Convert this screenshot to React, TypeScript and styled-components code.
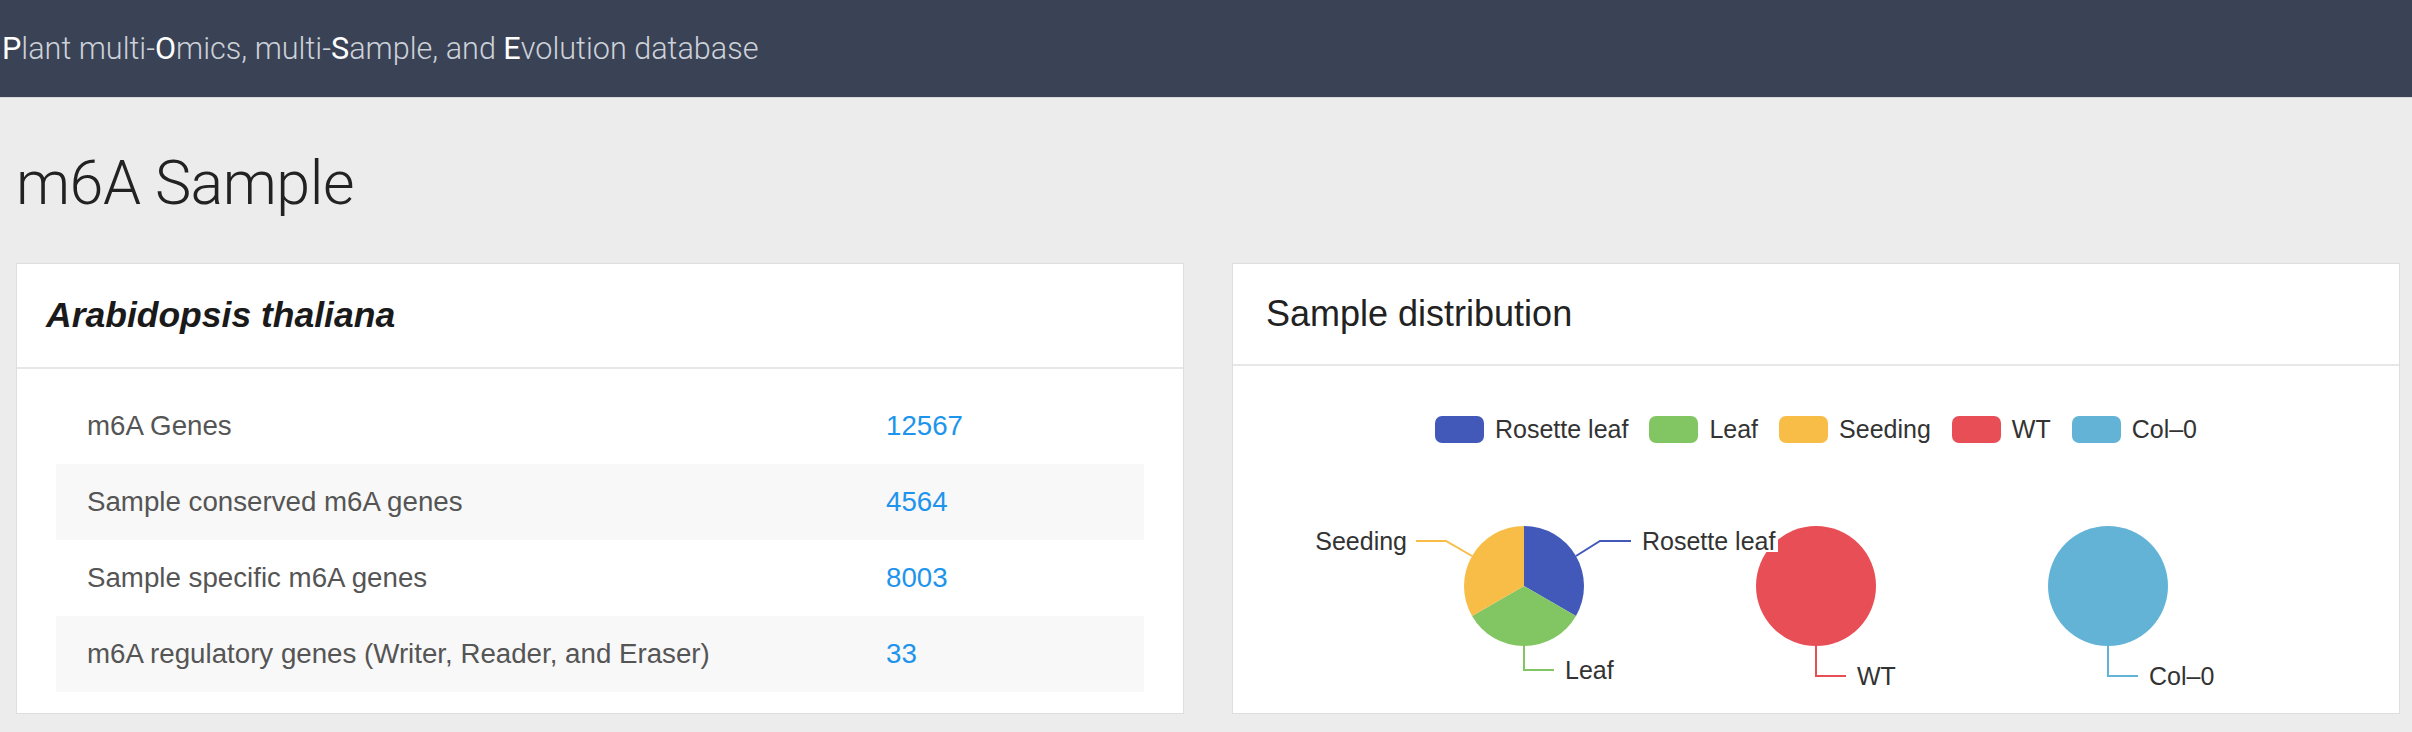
import React from "react";
import styled, { createGlobalStyle } from "styled-components";

const GlobalStyle = createGlobalStyle`
  html, body { margin: 0; padding: 0; background: #ececec; }
  body { font-family: "Liberation Sans", Arial, sans-serif; }
  #root { min-height: 732px; }
`;

const TopBar = styled.header`
  height: 97px;
  background: #3a4256;
  display: flex;
  align-items: center;
  padding-left: 2px;
  box-shadow: 0 1px 0 #d9d9d9;
`;

const BrandText = styled.span`
  font-family: Roboto, "Liberation Sans", sans-serif;
  font-weight: 300;
  font-size: 30.6px;
  color: #cdd1d8;
  white-space: pre;
`;

const Initial = styled.span`
  color: #ffffff;
  font-weight: 400;
`;

const PageTitle = styled.h1`
  margin: 53px 0 0 16px;
  font-family: Roboto, "Liberation Sans", sans-serif;
  font-weight: 300;
  font-size: 61px;
  line-height: 1.1;
  color: #222;
  letter-spacing: -0.5px;
`;

const CardGrid = styled.div`
  display: grid;
  grid-template-columns: 1168px 1168px;
  column-gap: 48px;
  padding: 0 12px 0 16px;
  margin-top: 46px;
`;

const Card = styled.section`
  background: #fff;
  border: 1px solid #dedede;
  height: 451px;
  box-sizing: border-box;
  display: flex;
  flex-direction: column;
`;

const CardHeader = styled.div<{ $h: number; $pad: number }>`
  height: ${(p) => p.$h}px;
  box-sizing: border-box;
  border-bottom: 2px solid #e7e7e7;
  display: flex;
  align-items: center;
  padding-left: ${(p) => p.$pad}px;
  flex-shrink: 0;
`;

const SpeciesTitle = styled.h3`
  margin: 0;
  font-size: 35.5px;
  font-weight: 700;
  font-style: italic;
  color: #1a1a1a;
`;

const PanelTitle = styled.h3`
  margin: 0;
  font-size: 36px;
  font-weight: 400;
  color: #222;
`;

const TableBody = styled.div`
  padding: 19px 39px 0;
`;

const StatRow = styled.div`
  display: grid;
  grid-template-columns: 799px 1fr;
  align-items: center;
  height: 76px;
  padding: 0 31px;
  font-size: 27.7px;
  color: #555;
  &:nth-child(even) {
    background: #f8f8f8;
  }
`;

const StatValue = styled.a`
  color: #1e94ec;
  text-decoration: none;
`;

const ChartBody = styled.div`
  padding-top: 50px;
  display: flex;
  flex-direction: column;
`;

const Legend = styled.div`
  display: flex;
  justify-content: center;
  gap: 21px;
  height: 27px;
`;

const LegendItem = styled.div`
  display: flex;
  align-items: center;
  gap: 11px;
  font-size: 25px;
  color: #333;
`;

const Swatch = styled.span<{ $c: string }>`
  display: block;
  width: 49px;
  height: 27px;
  border-radius: 7px;
  background: ${(p) => p.$c};
`;

const ChartSvg = styled.svg`
  display: block;
  width: 1166px;
  height: 270px;
  font-family: "Liberation Sans", Arial, sans-serif;
`;

const C = {
  blue: "#4259ba",
  green: "#82c563",
  yellow: "#f8bd47",
  red: "#e84e55",
  sky: "#63b3d7",
};

const legend = [
  { name: "Rosette leaf", c: C.blue },
  { name: "Leaf", c: C.green },
  { name: "Seeding", c: C.yellow },
  { name: "WT", c: C.red },
  { name: "Col\u20130", c: C.sky },
];

const stats = [
  { label: "m6A Genes", value: "12567" },
  { label: "Sample conserved m6A genes", value: "4564" },
  { label: "Sample specific m6A genes", value: "8003" },
  { label: "m6A regulatory genes (Writer, Reader, and Eraser)", value: "33" },
];

const PieCharts: React.FC = () => {
  const r = 60;
  const cy = 143;
  const pt = (cx: number, deg: number) => {
    const a = (deg * Math.PI) / 180;
    return `${cx + r * Math.sin(a)},${cy - r * Math.cos(a)}`;
  };
  const slice = (cx: number, a0: number, a1: number) =>
    `M${cx},${cy} L${pt(cx, a0)} A${r},${r} 0 0 1 ${pt(cx, a1)} Z`;
  return (
    <ChartSvg viewBox="0 0 1166 270">
      <circle cx={583} cy={cy} r={r} fill={C.red} />
      <circle cx={875} cy={cy} r={r} fill={C.sky} />
      <path d={slice(291, 0, 120)} fill={C.blue} />
      <path d={slice(291, 120, 240)} fill={C.green} />
      <path d={slice(291, 240, 360)} fill={C.yellow} />

      <polyline points="343,113 367,98 398,98" fill="none" stroke={C.blue} strokeWidth={2} />
      <rect x={407} y={84} width={138} height={25} fill="#fff" />
      <text x={409} y={107} fontSize={25} fill="#333">Rosette leaf</text>

      <polyline points="239,113 213,98 183,98" fill="none" stroke={C.yellow} strokeWidth={2} />
      <text x={174} y={107} fontSize={25} fill="#333" textAnchor="end">Seeding</text>

      <polyline points="291,203 291,227 321,227" fill="none" stroke={C.green} strokeWidth={2} />
      <text x={332} y={236} fontSize={25} fill="#333">Leaf</text>

      <polyline points="583,203 583,233 613,233" fill="none" stroke={C.red} strokeWidth={2} />
      <text x={624} y={242} fontSize={25} fill="#333">WT</text>

      <polyline points="875,203 875,233 905,233" fill="none" stroke={C.sky} strokeWidth={2} />
      <text x={916} y={242} fontSize={25} fill="#333">Col{"\u2013"}0</text>
    </ChartSvg>
  );
};

export default function App() {
  return (
    <>
      <GlobalStyle />
      <TopBar>
        <BrandText>
          <Initial>P</Initial>lant multi-<Initial>O</Initial>mics, multi-<Initial>S</Initial>ample, and{" "}
          <Initial>E</Initial>volution database
        </BrandText>
      </TopBar>
      <PageTitle>m6A Sample</PageTitle>
      <CardGrid>
        <Card>
          <CardHeader $h={105} $pad={29}>
            <SpeciesTitle>Arabidopsis thaliana</SpeciesTitle>
          </CardHeader>
          <TableBody>
            {stats.map((s) => (
              <StatRow key={s.label}>
                <span>{s.label}</span>
                <StatValue href="#">{s.value}</StatValue>
              </StatRow>
            ))}
          </TableBody>
        </Card>
        <Card>
          <CardHeader $h={102} $pad={33}>
            <PanelTitle>Sample distribution</PanelTitle>
          </CardHeader>
          <ChartBody>
            <Legend>
              {legend.map((l) => (
                <LegendItem key={l.name}>
                  <Swatch $c={l.c} />
                  {l.name}
                </LegendItem>
              ))}
            </Legend>
            <PieCharts />
          </ChartBody>
        </Card>
      </CardGrid>
    </>
  );
}
